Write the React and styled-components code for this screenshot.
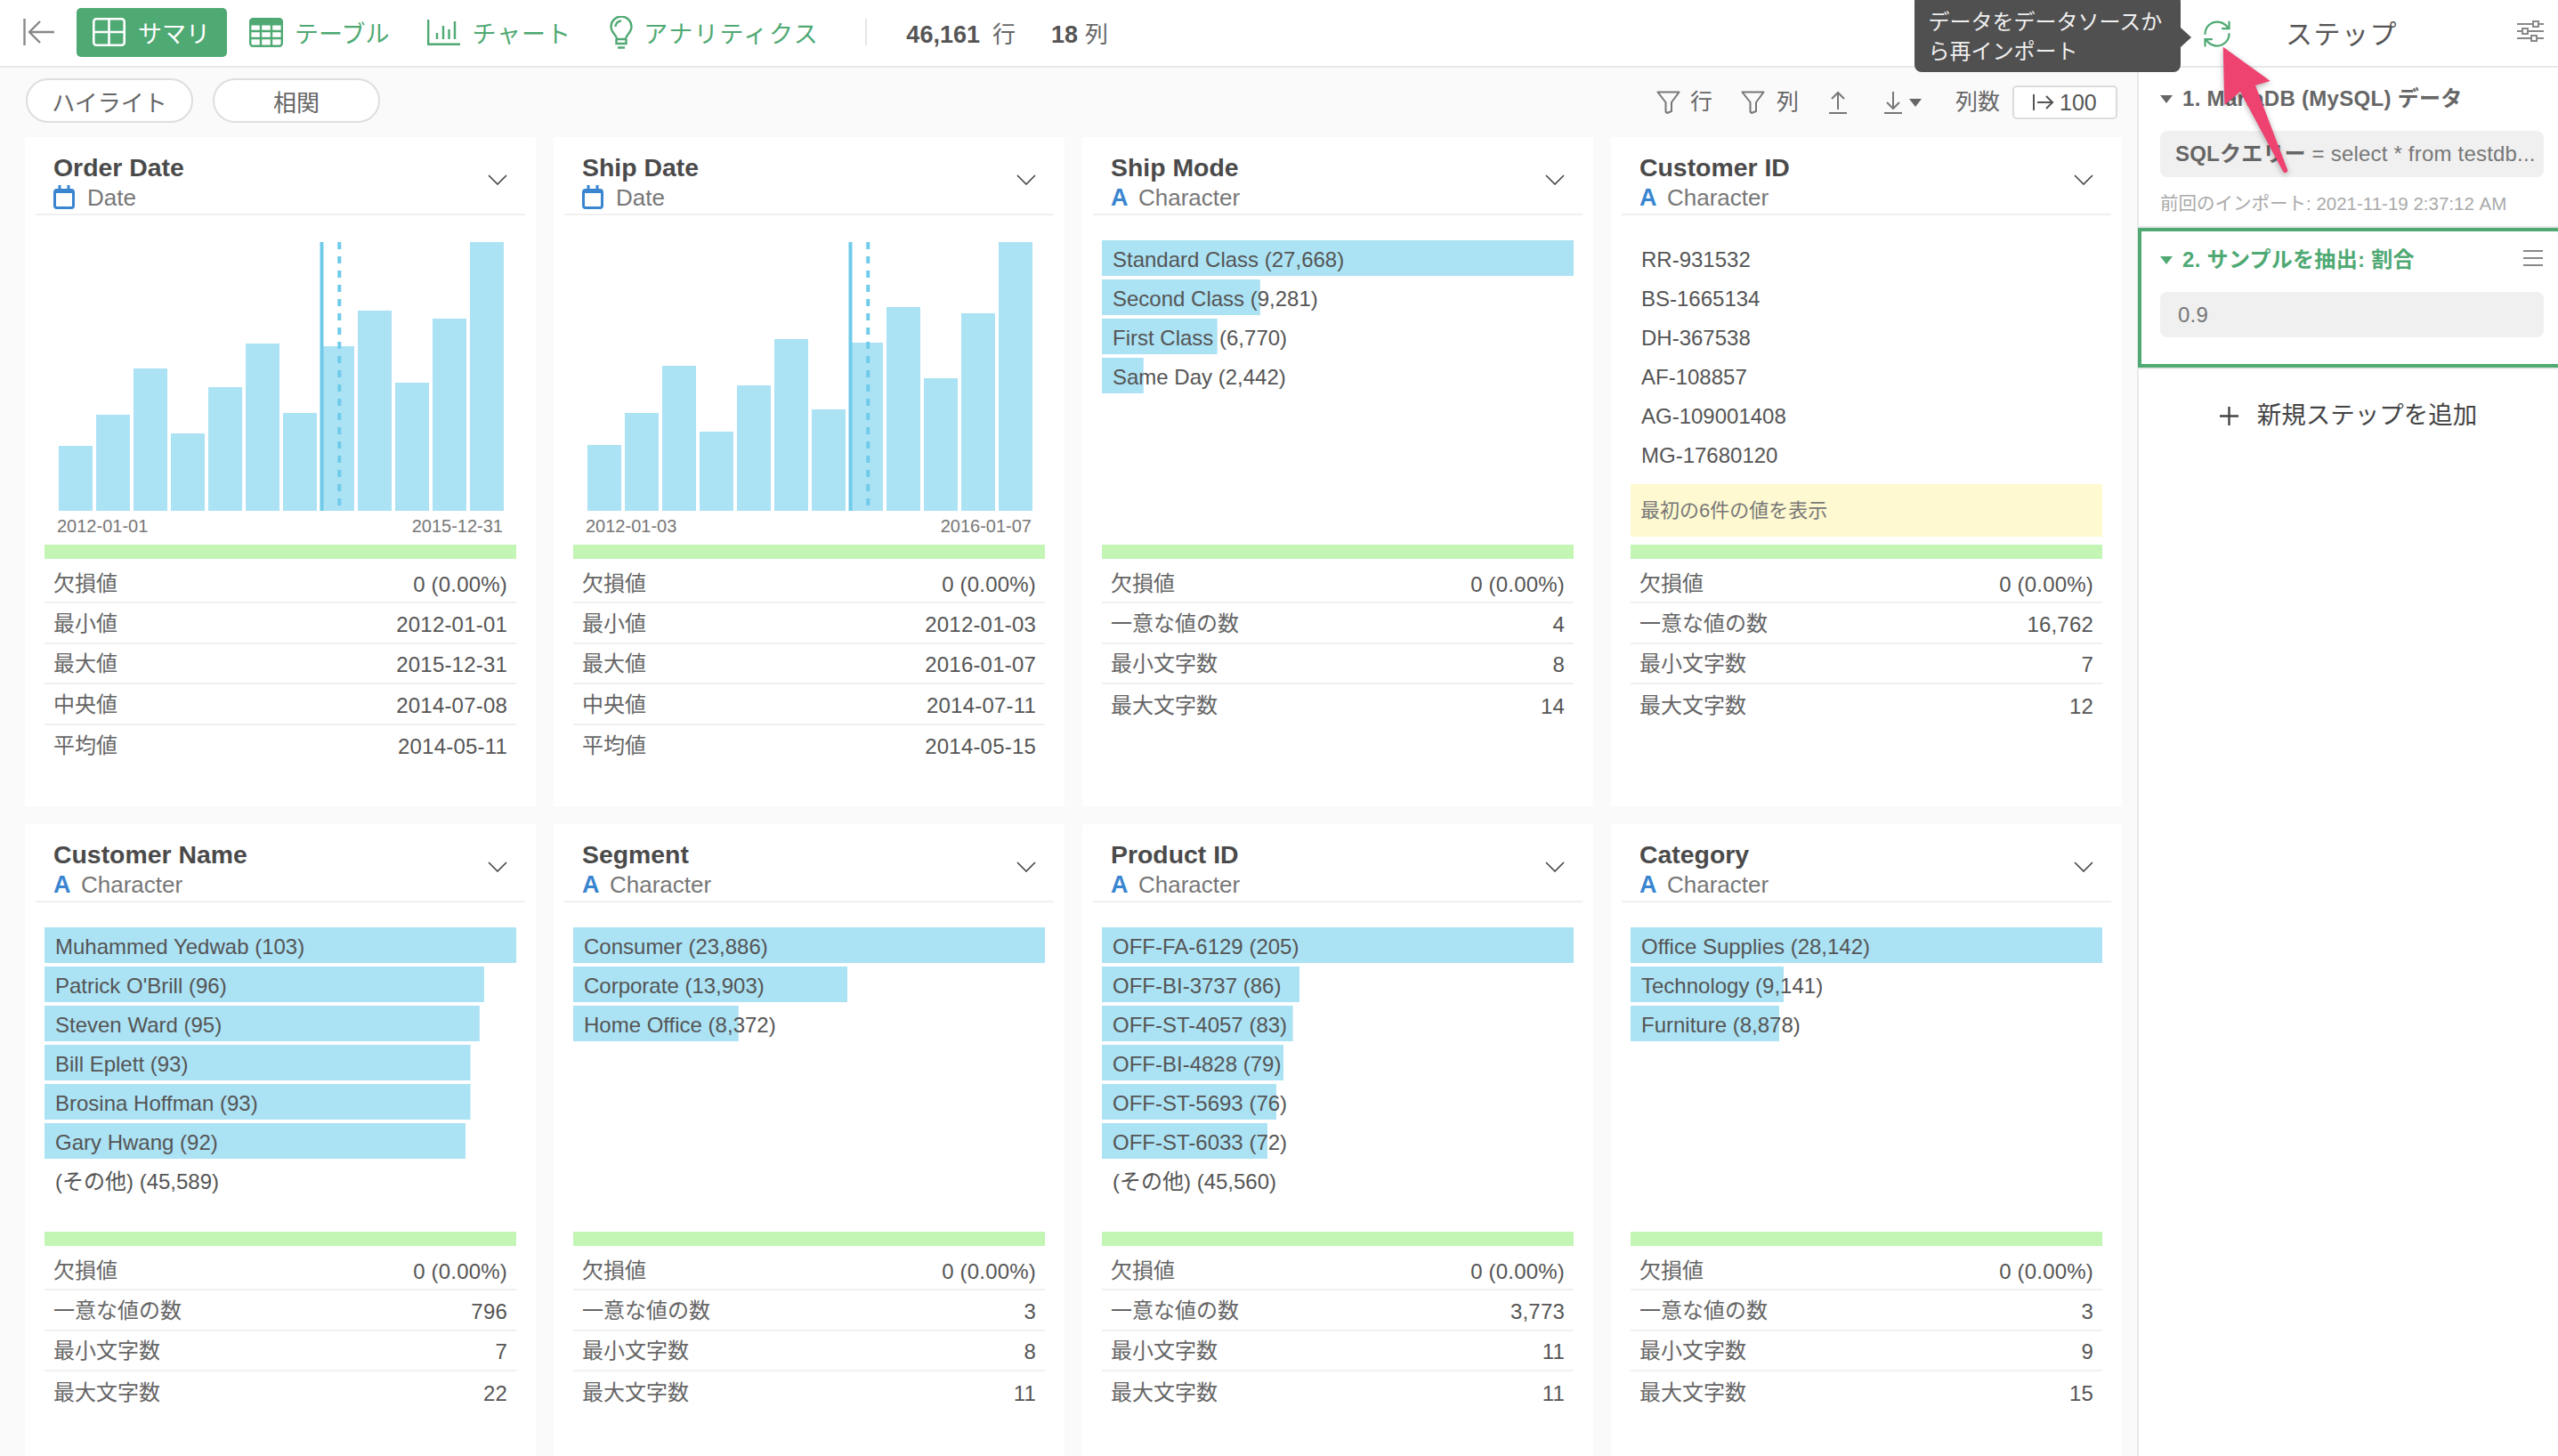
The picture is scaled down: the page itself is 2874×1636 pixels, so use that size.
import React from 'react';
import styled, { createGlobalStyle } from 'styled-components';
import { RefreshCw } from 'lucide-react';

const GREEN = '#4fa973';
const BLUE = '#3a85d0';
const BAR = '#abe2f4';

const GlobalStyle = createGlobalStyle`
    html, body {
        margin: 0;
        padding: 0;
        background: #fafafa;
    }
    body {
        font-family: "Liberation Sans", "Noto Sans CJK JP", sans-serif;
        color: #555;
    }
    * {
        box-sizing: border-box;
    }
`

const Page = styled.div`
    position: relative;
    width: 2874px;
    height: 1636px;
    overflow: hidden;
    display: flex;
    flex-direction: column;
`

const TopBar = styled.header`
    flex: 0 0 76px;
    display: flex;
    align-items: center;
    padding: 0 0 2px 26px;
    background: #fff;
    border-bottom: 2px solid #e8e8e8;
`

const BackIcon = styled.svg`
    width: 36px;
    height: 30px;
    margin-right: 24px;
`

const NavTab = styled.div`
    display: flex;
    align-items: center;
    height: 55px;
    margin-left: ${props => props.$offset || 0}px;
    padding: ${props => props.$active ? '0 19px 0 18px' : '0'};
    gap: ${props => props.$gap || 13}px;
    background: ${props => props.$active ? GREEN : 'transparent'};
    color: ${props => props.$active ? '#fff' : GREEN};
    border-radius: 5px;
    font-size: 27px;
    letter-spacing: ${props => props.$spacing || 0}px;
    white-space: nowrap;
`

const Divider = styled.div`
    width: 2px;
    height: 30px;
    margin: 0 44px 0 52px;
    background: #e6e6e6;
`

const Count = styled.div`
    display: flex;
    align-items: baseline;
    gap: ${props => props.$gap}px;
    margin-right: 40px;
    font-size: 26px;
    color: #666;
    b {
        font-size: 27px;
        color: #555;
    }
`

const RightHead = styled.div`
    position: relative;
    margin-left: auto;
    width: 401.5px;
    height: 100%;
    display: flex;
    align-items: center;
    padding-right: 16px;
    svg.refresh {
        margin-top: 3px;
    }
`

const Tooltip = styled.div`
    position: absolute;
    top: -6px;
    right: calc(100% + 23px);
    width: 299px;
    height: 87px;
    padding: 14px 16px 0;
    background: #505050;
    border-radius: 8px;
    color: #f0f0f0;
    font-size: 24px;
    line-height: 33px;
    white-space: nowrap;
    &::after {
        content: '';
        position: absolute;
        left: 100%;
        top: 37px;
        border-left: 12px solid #505050;
        border-top: 11px solid transparent;
        border-bottom: 11px solid transparent;
    }
`

const StepHeading = styled.div`
    margin-left: 59.5px;
    font-size: 30px;
    letter-spacing: 1.5px;
    color: #555;
`

const SettingsIcon = styled.svg`
    width: 30px;
    height: 24px;
    margin-left: auto;
    margin-top: -3px;
`

const Body = styled.div`
    flex: 1;
    display: flex;
    min-height: 0;
`

const Main = styled.main`
    flex: 0 0 2401px;
    display: flex;
    flex-direction: column;
    min-height: 0;
`

const FilterBar = styled.div`
    flex: 0 0 78px;
    display: flex;
    justify-content: space-between;
    padding: 12px 22px 0 29px;
`

const Pills = styled.div`
    display: flex;
    gap: 22px;
`

const Pill = styled.div`
    width: 188px;
    height: 50px;
    display: flex;
    align-items: center;
    justify-content: center;
    background: #fff;
    border: 2px solid #dedede;
    border-radius: 25px;
    font-size: 26px;
    color: #666;
`

const Tools = styled.div`
    display: flex;
    align-items: center;
    height: 38px;
    margin-top: 8px;
    font-size: 25px;
    color: #666;
`

const ToolIcon = styled.svg`
    flex: none;
    margin-left: ${props => props.$offset || 0}px;
`

const ToolLabel = styled.span`
    margin-left: ${props => props.$offset || 0}px;
    margin-top: -6px;
`

const Caret = styled.span`
    flex: none;
    display: inline-block;
    margin-left: ${props => props.$offset || 0}px;
    border-top: ${props => props.$h || 9}px solid ${props => props.$color || '#666'};
    border-left: ${props => props.$w || 7.5}px solid transparent;
    border-right: ${props => props.$w || 7.5}px solid transparent;
`

const ColumnBox = styled.div`
    width: 118px;
    height: 38px;
    margin-left: 14px;
    padding-left: 21px;
    display: flex;
    align-items: center;
    gap: 6px;
    background: #fff;
    border: 2px solid #dcdcdc;
    border-radius: 5px;
    font-size: 25px;
    color: #555;
`

const Grid = styled.div`
    flex: 1;
    min-height: 0;
    display: grid;
    grid-template-columns: repeat(4, 574px);
    grid-template-rows: 752px 1fr;
    gap: 20px;
    padding-left: 28px;
`

const Card = styled.section`
    background: #fff;
    overflow: hidden;
`

const CardHeader = styled.div`
    height: 88px;
    margin: 0 12px;
    padding: 17px 20px 0;
    display: flex;
    justify-content: space-between;
    border-bottom: 2px solid #f0f0f0;
`

const Title = styled.div`
    height: 34px;
    font-size: 28.400px;
    font-weight: 700;
    line-height: 34px;
    color: #4a4a4a;
`

const TypeRow = styled.div`
    display: flex;
    align-items: center;
    height: 34px;
    font-size: 26px;
    color: #777;
`

const TypeLetter = styled.span`
    width: 31px;
    font-size: 27px;
    font-weight: 700;
    color: ${BLUE};
`

const CalendarIcon = styled.svg`
    width: 24px;
    height: 27px;
    margin-right: 14px;
    margin-top: -2px;
`

const Chevron = styled.svg`
    width: 22px;
    height: 12px;
    margin-top: 25px;
`

const Content = styled.div`
    height: 370px;
    margin: 0 22px;
    display: flex;
    flex-direction: column;
`

const Chart = styled.svg`
    display: block;
    width: 500px;
    height: 302px;
    margin: 30px 0 0 16px;
`

const AxisRow = styled.div`
    display: flex;
    justify-content: space-between;
    margin-top: 5px;
    padding: 0 15px 0 14px;
    font-size: 20px;
    line-height: 24px;
    color: #777;
`

const BarList = styled.div`
    display: flex;
    flex-direction: column;
    gap: 4px;
    padding-top: 28px;
`

const BarRow = styled.div`
    height: 40px;
    padding-left: 12px;
    font-size: 24px;
    line-height: 43px;
    color: #555;
    white-space: nowrap;
    background-image: linear-gradient(${BAR}, ${BAR});
    background-repeat: no-repeat;
`

const ValueList = styled.div`
    padding-top: 28px;
`

const ValueRow = styled.div`
    height: 44px;
    padding-left: 12px;
    font-size: 24px;
    line-height: 44px;
    color: #555;
`

const Notice = styled.div`
    height: 59px;
    margin-top: 10px;
    padding-left: 11px;
    background: #fef9d0;
    font-size: 22px;
    line-height: 59px;
    color: #777;
`

const Meter = styled.div`
    height: 16px;
    margin: 0 22px;
    background: #c3f5b5;
`

const Stats = styled.div`
    margin: 5px 22px 0;
`

const StatRow = styled.div`
    height: 45.400px;
    padding: 0 10px;
    display: flex;
    align-items: center;
    justify-content: space-between;
    border-bottom: 2px solid #f0f0f0;
    font-size: 24px;
    color: #666;
    &:last-child {
        border-bottom: none;
    }
`

const StatLabel = styled.span`
    margin-top: -3px;
`

const StatValue = styled.span`
    padding-top: 4px;
    letter-spacing: 0.2px;
    color: #555;
`

const Sidebar = styled.aside`
    flex: 1;
    background: #fff;
    border-left: 2px solid #e8e8e8;
    min-width: 0;
`

const StepBlock = styled.div`
    height: 180px;
    padding: 18px 16px 0 24px;
    border-bottom: 2px solid #e8e8e8;
`

const StepTitle = styled.div`
    display: flex;
    align-items: center;
    gap: 11px;
    font-size: 24px;
    font-weight: 700;
    letter-spacing: 0.3px;
    line-height: 34px;
    color: ${props => props.$active ? GREEN : '#666'};
`

const QueryBox = styled.div`
    height: ${props => props.$h}px;
    margin-top: 19px;
    padding-left: ${props => props.$pad}px;
    background: #f0f0f0;
    border-radius: 8px;
    font-size: 24px;
    letter-spacing: 0.2px;
    line-height: ${props => props.$h}px;
    color: #777;
    white-space: nowrap;
    overflow: hidden;
    b {
        color: #666;
    }
`

const ImportNote = styled.div`
    margin-top: 17px;
    font-size: 20.500px;
    line-height: 26px;
    color: #aaa;
    white-space: nowrap;
`

const ActiveStep = styled.div`
    height: 157px;
    margin-left: -1px;
    padding: 15px 16px 0 21px;
    border: 4px solid ${GREEN};
    border-right: none;
`

const MenuIcon = styled.svg`
    width: 22px;
    height: 18px;
    margin-left: auto;
    margin-right: 1px;
    margin-top: -4px;
`

const AddStep = styled.div`
    margin-top: 32px;
    display: flex;
    align-items: center;
    justify-content: center;
    gap: 21px;
    font-size: 27.500px;
    line-height: 40px;
    color: #444;
`

const ActiveSeparator = styled.div`
    height: 2px;
    background: #e8e8e8;
`

const Pointer = styled.svg`
    position: absolute;
    left: 2490px;
    top: 45px;
    width: 90px;
    height: 156px;
    filter: drop-shadow(0 2px 3px rgba(0, 0, 0, 0.3));
    pointer-events: none;
`

const Back = () => (
    <BackIcon viewBox="0 0 36 30" fill="none" stroke="#888" strokeWidth="2.4">
        <path d="M1.500 0v30" />
        <path d="M35 15H7M19 3 7 15l12 12" />
    </BackIcon>
)

const SummaryIcon = () => (
    <svg width="37" height="32" viewBox="0 0 37 32" fill="none" stroke="#fff" strokeWidth="2.6">
        <rect x="1.300" y="1.300" width="34.400" height="29.400" rx="3" />
        <path d="M18.500 1v30M1 16h35" />
    </svg>
)

const TableIcon = () => (
    <svg width="38" height="33" viewBox="0 0 38 33" fill="none" stroke={GREEN} strokeWidth="2.400">
        <rect x="1.200" y="1.200" width="35.600" height="30.600" rx="3" />
        <path d="M1 5h36" strokeWidth="7" />
        <path d="M13 1v31M25 1v31M1 15h36M1 23h36" />
    </svg>
)

const ChartIcon = () => (
    <svg width="37" height="29" viewBox="0 0 37 29" fill="none" stroke={GREEN} strokeWidth="2.400">
        <path d="M1.200 0v27.800H37" />
        <path d="M11 15v7M18 7v15M24.500 11v11M31 2v20" />
    </svg>
)

const BulbIcon = () => (
    <svg width="26" height="37" viewBox="0 0 26 37" fill="none" stroke={GREEN} strokeWidth="2.400">
        <path d="M8 26c0-5-6.500-7-6.500-14a11.500 11.500 0 0 1 23 0c0 7-6.500 9-6.500 14z" />
        <path d="M7.500 26v5h11v-5M9 35.500h8" />
        <path d="M6.500 12a6.500 6.500 0 0 1 6.500-6.500" />
    </svg>
)

const Sliders = () => (
    <SettingsIcon viewBox="0 0 30 24" fill="none" stroke="#888" strokeWidth="2">
        <path d="M0 4h18M24 4h6M0 12h6M12 12h18M0 20h16M22 20h8" />
        <rect x="18" y="1" width="6" height="6" fill="#fff" />
        <rect x="6" y="9" width="6" height="6" fill="#fff" />
        <rect x="16" y="17" width="6" height="6" fill="#fff" />
    </SettingsIcon>
)

const Funnel = ({ offset }) => (
    <ToolIcon $offset={offset} width="27" height="26" viewBox="0 0 27 26" fill="none" stroke="#777" strokeWidth="2" strokeLinejoin="round">
        <path d="M1.500 1.500h24L17 13v10l-5 2-1.500-1.500V13z" />
    </ToolIcon>
)

const Arrow = ({ offset, down }) => (
    <ToolIcon $offset={offset} width="20" height="26" viewBox="0 0 20 26" fill="none" stroke="#777" strokeWidth="2">
        {down
            ? <path d="M10 1v19M3 13l7 7 7-7" />
            : <path d="M10 21V2M3 9l7-7 7 7" />}
        <path d="M0 25h20" />
    </ToolIcon>
)

const Calendar = () => (
    <CalendarIcon viewBox="0 0 24 27" fill="none" stroke={BLUE}>
        <rect x="1.500" y="5.500" width="21" height="20" rx="2.500" strokeWidth="3" />
        <path d="M1 7h22" strokeWidth="4" />
        <path d="M7 0v5M17 0v5" strokeWidth="3" />
    </CalendarIcon>
)

const Histogram = ({ heights }) => (
    <Chart viewBox="0 0 500 302">
        {heights.map((h, i) => (
            <rect key={i} x={i * 42} y={302 - h} width="38" height={h} fill={BAR} />
        ))}
        <rect x="293.500" y="0" width="4" height="302" fill="#6fcbe9" />
        <path d="M315.300 0V296" stroke="#6fcbe9" strokeWidth="4" strokeDasharray="8 8" />
    </Chart>
)

const Bars = ({ items, rest }) => {
    const max = Math.max(...items.map(item => item.count));
    return (
        <BarList>
            {items.map(item => (
                <BarRow key={item.name} style={{ backgroundSize: `${item.count / max * 100}% 100%` }}>
                    {item.name} ({item.count.toLocaleString('en-US')})
                </BarRow>
            ))}
            {rest ? <BarRow style={{ backgroundSize: '0 0' }}>{rest}</BarRow> : null}
        </BarList>
    )
}

const StatTable = ({ rows }) => (
    <Stats>
        {rows.map(([label, value]) => (
            <StatRow key={label}>
                <StatLabel>{label}</StatLabel>
                <StatValue>{value}</StatValue>
            </StatRow>
        ))}
    </Stats>
)

const ColumnCard = ({ card }) => (
    <Card>
        <CardHeader>
            <div>
                <Title>{card.title}</Title>
                {card.type === 'Date'
                    ? <TypeRow><Calendar />Date</TypeRow>
                    : <TypeRow><TypeLetter>A</TypeLetter>Character</TypeRow>}
            </div>
            <Chevron viewBox="0 0 22 12" fill="none" stroke="#444" strokeWidth="1.600">
                <path d="M1 1l10 10L21 1" />
            </Chevron>
        </CardHeader>
        <Content>
            {card.heights ? (
                <>
                    <Histogram heights={card.heights} />
                    <AxisRow><span>{card.axis[0]}</span><span>{card.axis[1]}</span></AxisRow>
                </>
            ) : null}
            {card.items ? <Bars items={card.items} rest={card.rest} /> : null}
            {card.values ? (
                <>
                    <ValueList>
                        {card.values.map(value => <ValueRow key={value}>{value}</ValueRow>)}
                    </ValueList>
                    <Notice>最初の6件の値を表示</Notice>
                </>
            ) : null}
        </Content>
        <Meter />
        <StatTable rows={card.stats} />
    </Card>
)

const textStats = (unique, min, max) => [
    ['欠損値', '0 (0.00%)'],
    ['一意な値の数', unique],
    ['最小文字数', min],
    ['最大文字数', max],
]

const dateStats = (min, max, median, mean) => [
    ['欠損値', '0 (0.00%)'],
    ['最小値', min],
    ['最大値', max],
    ['中央値', median],
    ['平均値', mean],
]

const cards = [
    {
        title: 'Order Date',
        type: 'Date',
        heights: [73, 108, 160, 87, 139, 188, 110, 185, 225, 144, 216, 302],
        axis: ['2012-01-01', '2015-12-31'],
        stats: dateStats('2012-01-01', '2015-12-31', '2014-07-08', '2014-05-11'),
    },
    {
        title: 'Ship Date',
        type: 'Date',
        heights: [74, 110, 163, 89, 141, 193, 114, 189, 229, 149, 222, 302],
        axis: ['2012-01-03', '2016-01-07'],
        stats: dateStats('2012-01-03', '2016-01-07', '2014-07-11', '2014-05-15'),
    },
    {
        title: 'Ship Mode',
        type: 'Character',
        items: [
            { name: 'Standard Class', count: 27668 },
            { name: 'Second Class', count: 9281 },
            { name: 'First Class', count: 6770 },
            { name: 'Same Day', count: 2442 },
        ],
        stats: textStats('4', '8', '14'),
    },
    {
        title: 'Customer ID',
        type: 'Character',
        values: ['RR-931532', 'BS-1665134', 'DH-367538', 'AF-108857', 'AG-109001408', 'MG-17680120'],
        stats: textStats('16,762', '7', '12'),
    },
    {
        title: 'Customer Name',
        type: 'Character',
        items: [
            { name: 'Muhammed Yedwab', count: 103 },
            { name: "Patrick O'Brill", count: 96 },
            { name: 'Steven Ward', count: 95 },
            { name: 'Bill Eplett', count: 93 },
            { name: 'Brosina Hoffman', count: 93 },
            { name: 'Gary Hwang', count: 92 },
        ],
        rest: '(その他) (45,589)',
        stats: textStats('796', '7', '22'),
    },
    {
        title: 'Segment',
        type: 'Character',
        items: [
            { name: 'Consumer', count: 23886 },
            { name: 'Corporate', count: 13903 },
            { name: 'Home Office', count: 8372 },
        ],
        stats: textStats('3', '8', '11'),
    },
    {
        title: 'Product ID',
        type: 'Character',
        items: [
            { name: 'OFF-FA-6129', count: 205 },
            { name: 'OFF-BI-3737', count: 86 },
            { name: 'OFF-ST-4057', count: 83 },
            { name: 'OFF-BI-4828', count: 79 },
            { name: 'OFF-ST-5693', count: 76 },
            { name: 'OFF-ST-6033', count: 72 },
        ],
        rest: '(その他) (45,560)',
        stats: textStats('3,773', '11', '11'),
    },
    {
        title: 'Category',
        type: 'Character',
        items: [
            { name: 'Office Supplies', count: 28142 },
            { name: 'Technology', count: 9141 },
            { name: 'Furniture', count: 8878 },
        ],
        stats: textStats('3', '9', '15'),
    },
]

const App = () => (
    <Page>
        <GlobalStyle />
        <TopBar>
            <Back />
            <NavTab $active $gap={14}><SummaryIcon />サマリ</NavTab>
            <NavTab $offset={25}><TableIcon />テーブル</NavTab>
            <NavTab $offset={43} $spacing={1}><ChartIcon />チャート</NavTab>
            <NavTab $offset={43} $gap={12} $spacing={1.600}><BulbIcon />アナリティクス</NavTab>
            <Divider />
            <Count $gap={14}><b>46,161</b>行</Count>
            <Count $gap={8}><b>18</b>列</Count>
            <RightHead>
                <Tooltip>データをデータソースか<br />ら再インポート</Tooltip>
                <RefreshCw className="refresh" size={36} color={GREEN} strokeWidth={1.5} />
                <StepHeading>ステップ</StepHeading>
                <Sliders />
            </RightHead>
        </TopBar>
        <Body>
            <Main>
                <FilterBar>
                    <Pills>
                        <Pill>ハイライト</Pill>
                        <Pill>相関</Pill>
                    </Pills>
                    <Tools>
                        <Funnel />
                        <ToolLabel $offset={11}>行</ToolLabel>
                        <Funnel offset={32} />
                        <ToolLabel $offset={13}>列</ToolLabel>
                        <Arrow offset={34} />
                        <Arrow offset={42} down />
                        <Caret $offset={8} />
                        <ToolLabel $offset={38}>列数</ToolLabel>
                        <ColumnBox>
                            <svg width="24" height="20" viewBox="0 0 24 20" fill="none" stroke="#555" strokeWidth="2">
                                <path d="M1 1v18M5 10h18M15 3l7 7-7 7" />
                            </svg>
                            100
                        </ColumnBox>
                    </Tools>
                </FilterBar>
                <Grid>
                    {cards.map(card => <ColumnCard key={card.title} card={card} />)}
                </Grid>
            </Main>
            <Sidebar>
                <StepBlock>
                    <StepTitle><Caret />1. MariaDB (MySQL) データ</StepTitle>
                    <QueryBox $h={52} $pad={17}><b>SQLクエリー</b> = select * from testdb...</QueryBox>
                    <ImportNote>前回のインポート: 2021-11-19 2:37:12 AM</ImportNote>
                </StepBlock>
                <ActiveStep>
                    <StepTitle $active>
                        <Caret $color={GREEN} />
                        2. サンプルを抽出: 割合
                        <MenuIcon viewBox="0 0 22 18" fill="none" stroke="#888" strokeWidth="1.800">
                            <path d="M0 1h22M0 9h22M0 17h22" />
                        </MenuIcon>
                    </StepTitle>
                    <QueryBox $h={51} $pad={20}>0.9</QueryBox>
                </ActiveStep>
                <ActiveSeparator />
                <AddStep>
                    <svg width="21" height="21" viewBox="0 0 21 21" fill="none" stroke="#444" strokeWidth="2.400">
                        <path d="M10.500 0v21M0 10.500h21" />
                    </svg>
                    新規ステップを追加
                </AddStep>
            </Sidebar>
        </Body>
        <Pointer viewBox="0 0 90 156" fill="#ee4270">
            <path d="M7.700 7.700 60.700 46 44 51 80 145.500q1 2.500-1.500 3.500-2.500.8-3.500-1.500L27 58 9.300 73z" />
        </Pointer>
    </Page>
)

export default App
